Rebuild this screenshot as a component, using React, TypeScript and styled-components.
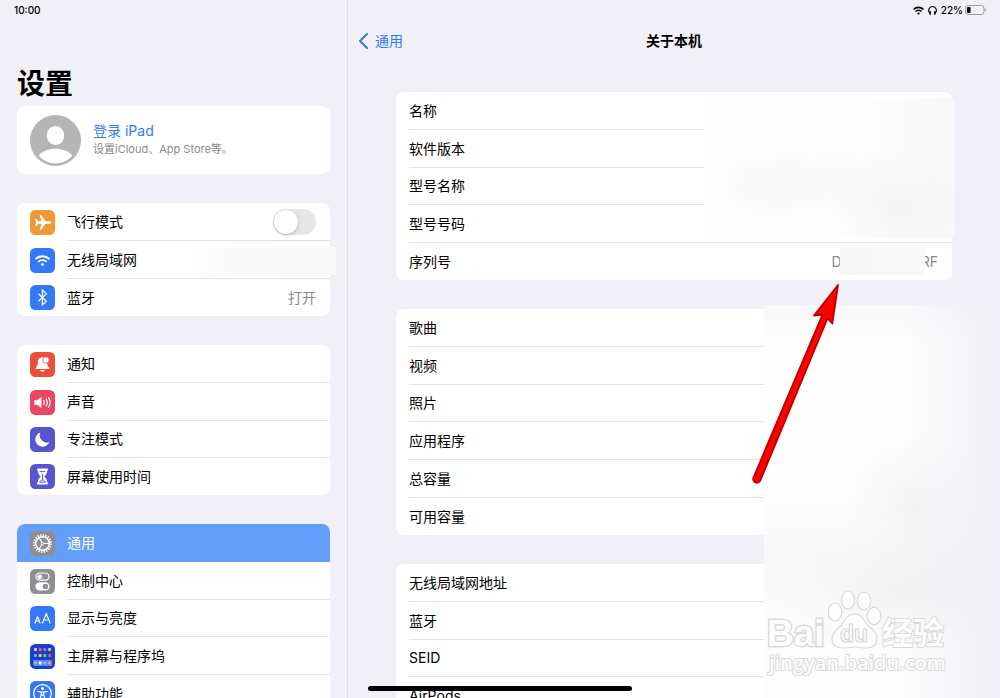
import React from "react";
import styled, { createGlobalStyle, css } from "styled-components";

const GlobalStyle = createGlobalStyle`
  *, *::before, *::after { box-sizing: border-box; }
  body {
    margin: 0;
    background: #f1f0f6;
    color: #000;
    font-family: Inter, "Noto Sans CJK SC", sans-serif;
    font-size: 14px;
    line-height: 20px;
  }
`;

const blue = "#2f79f6";
const line = "#e3e3e6";

const Screen = styled.div`
  position: relative;
  display: grid;
  grid-template-columns: 348px minmax(0, 1fr);
  height: 100vh;
  overflow: hidden;
`;

const Sidebar = styled.nav`
  padding: 0 17px;
  border-right: 1px solid #dfdfe4;
  overflow: hidden;
`;

const Main = styled.main`
  overflow: hidden;
`;

const StatusBar = styled.div<{ $end?: boolean }>`
  display: flex;
  align-items: center;
  justify-content: ${(p) => (p.$end ? "flex-end" : "flex-start")};
  gap: 4px;
  height: 20px;
  margin: ${(p) => (p.$end ? "0 13px 0 0" : "0 0 0 -3px")};
  font-size: 10px;
  font-weight: 500;
`;

const BatteryLevel = styled.span`
  display: flex;
  align-items: center;
  gap: 2px;
`;

const PageTitle = styled.h1`
  margin: 46px 0 4px;
  font-size: 28px;
  line-height: 36px;
  font-weight: 700;
`;

const Groups = styled.div`
  display: flex;
  flex-direction: column;
  gap: 29px;
`;

const cardStyle = css`
  background: #fff;
  border-radius: 8px;
`;

const Account = styled.a`
  ${cardStyle}
  display: flex;
  align-items: center;
  gap: 12px;
  min-height: 68px;
  padding: 0 13px;
  color: inherit;
  text-decoration: none;
`;

const AccountText = styled.span`
  display: flex;
  flex-direction: column;
`;

const AccountName = styled.span`
  color: ${blue};
  line-height: 18px;
`;

const AccountHint = styled.span`
  color: #8a8a8e;
  font-size: 11px;
  line-height: 18px;
`;

const rowHeights = css`
  height: 38px;
  &:nth-child(3n), &:last-child { height: 37px; }
`;

const NavGroup = styled.ul`
  ${cardStyle}
  margin: 0;
  padding: 0;
  list-style: none;
`;

const NavItem = styled.li<{ $active?: boolean }>`
  ${rowHeights}
  position: relative;
  display: flex;
  background: ${(p) => (p.$active ? "#639ff8" : "transparent")};
  color: ${(p) => (p.$active ? "#fff" : "#000")};
  &:first-child { border-radius: 8px 8px 0 0; }
`;

const rowLayout = css`
  flex: 1;
  display: flex;
  align-items: center;
  gap: 12px;
  padding-left: 13px;
  color: inherit;
  text-decoration: none;
`;

const NavLink = styled.a`${rowLayout}`;
const NavLabel = styled.label`${rowLayout}`;

const NavBody = styled.span<{ $line: boolean }>`
  flex: 1;
  align-self: stretch;
  display: flex;
  align-items: center;
  justify-content: space-between;
  padding-right: 14px;
  border-bottom: ${(p) => (p.$line ? `1px solid ${line}` : "0")};
`;

const NavValue = styled.span`
  color: #8a8a8e;
`;

const Toggle = styled.input`
  appearance: none;
  display: flex;
  width: 43px;
  height: 26px;
  margin: 0;
  padding: 1px;
  border-radius: 13px;
  background: #e6e6e7;
  &::before {
    content: "";
    width: 24px;
    height: 24px;
    border-radius: 12px;
    background: #fff;
    box-shadow: 0 1px 3px rgba(0, 0, 0, 0.25);
  }
  &:checked { justify-content: flex-end; background: #34c759; }
`;

const NetworkMask = styled.span`
  position: absolute;
  top: 6px;
  right: -6px;
  width: 150px;
  height: 28px;
  background: linear-gradient(90deg, rgba(247, 247, 248, 0), #f9f9fa 35%, #f7f7f8);
`;

const TopBar = styled.header`
  display: grid;
  grid-template-columns: 1fr auto 1fr;
  align-items: center;
  height: 42px;
  margin-bottom: 30px;
  padding: 0 10px;
`;

const Back = styled.a`
  display: flex;
  align-items: center;
  gap: 6px;
  color: ${blue};
  text-decoration: none;
`;

const Heading = styled.h2`
  margin: 0;
  font-size: 14px;
  font-weight: 700;
`;

const Details = styled(Groups)`
  position: relative;
  padding: 0 48px;
`;

const InfoGroup = styled.dl`
  ${cardStyle}
  margin: 0;
  padding-left: 13px;
`;

const InfoRow = styled.div`
  ${rowHeights}
  display: flex;
  align-items: center;
  justify-content: space-between;
  padding-right: 14px;
  border-bottom: 1px solid ${line};
  &:last-child { border-bottom: 0; }
`;

const InfoValue = styled.dd`
  display: flex;
  align-items: center;
  margin: 0;
  color: #8a8a8e;
`;

const SerialMask = styled.span`
  position: relative;
  width: 85px;
  height: 27px;
  margin: 0 -4px 0 -2px;
  background: linear-gradient(90deg, #f6f6f6, #f9f9f9);
`;

const InfoMask = styled.div`
  position: absolute;
  top: 7px;
  right: 45px;
  width: 251px;
  height: 138px;
  background:
    radial-gradient(ellipse 70px 60px at 196px 108px, #f4f4f4, rgba(248, 248, 248, 0)),
    radial-gradient(ellipse 60px 36px at 68px 86px, #f7f7f7, rgba(250, 250, 250, 0)),
    radial-gradient(ellipse 80px 36px at 130px 82px, #f9f9f9, rgba(250, 250, 250, 0)),
    linear-gradient(90deg, #fefefe 65%, #f8f8f9 95%);
`;

const ValuesMask = styled.div`
  position: absolute;
  top: 305px;
  right: 0;
  bottom: 0;
  width: 236px;
  background:
    linear-gradient(90deg, rgba(241, 240, 246, 0) 58%, rgba(241, 240, 246, 0.7) 86%, #f1f0f6 96%),
    radial-gradient(ellipse 70px 70px at 150px 200px, #f3f3f4, rgba(246, 246, 247, 0)),
    radial-gradient(ellipse 150px 65px at 145px 285px, #f2f2f3, rgba(246, 246, 247, 0)),
    linear-gradient(180deg, #f8f8fa, #fefefe 36px, #fefefe 190px, #f8f8fa 250px, #fdfdfd 310px);
`;

const Arrow = styled.svg`
  position: absolute;
  top: 280px;
  right: 156px;
`;

const Watermark = styled.svg`
  position: absolute;
  right: 36px;
  bottom: 18px;
`;

const HomeIndicator = styled.div`
  position: absolute;
  bottom: 7px;
  left: 50%;
  width: 264px;
  height: 5px;
  border-radius: 3px;
  background: #000;
  transform: translateX(-50%);
`;

const icons: Record<string, { bg: string; art: React.ReactNode }> = {
  airplane: {
    bg: "#f09a37",
    art: (
      <path
        fill="#fff"
        d="M21.2 12.5c0-.8-1.2-1.3-2.4-1.3h-3.4L11.3 5.2H9.6l2 6H8.1L6.5 9.1H5.2l.8 3.4-.8 3.4h1.3l1.6-2.1h3.5l-2 6h1.7l4.1-6h3.4c1.2 0 2.4-.5 2.4-1.3z"
      />
    ),
  },
  wifi: {
    bg: "#3478f6",
    art: (
      <g fill="none" stroke="#fff" strokeWidth="1.8">
        <path d="M5.6 11.1a9.8 9.8 0 0 1 13.8 0" />
        <path d="M8.3 13.9a6 6 0 0 1 8.4 0" />
        <path d="M12.5 18.2l-2-2.1a2.9 2.9 0 0 1 4 0z" fill="#fff" stroke="none" />
      </g>
    ),
  },
  bluetooth: {
    bg: "#3478f6",
    art: <path d="M8.4 8.8l8 7.4-4 3.7V5.1l4 3.7-8 7.4" fill="none" stroke="#fff" strokeWidth="1.2" />,
  },
  bell: {
    bg: "#eb4e3d",
    art: (
      <>
        <path
          fill="#fff"
          d="M12.3 5.2c-3.1 0-4.3 2.3-4.5 5-.2 3-.6 4-1.7 5.3-.4.5-.5.9-.4 1.5h13.6c.1-.6 0-1-.4-1.5-1.1-1.3-1.6-2.3-1.7-5.3-.2-2.7-1.8-5-4.9-5zM10.3 18h4.4c-.2 1-1.1 1.7-2.2 1.7s-2-.7-2.2-1.7z"
        />
        <circle cx="16" cy="8" r="3.2" fill="#fff" stroke="#eb4e3d" strokeWidth=".8" />
      </>
    ),
  },
  sound: {
    bg: "#eb4560",
    art: (
      <>
        <path fill="#fff" d="M4.3 10.2h2.9l4.3-3.5v11.6l-4.3-3.5H4.3z" />
        <g fill="none" stroke="#fff" strokeWidth="1.2" strokeLinecap="round">
          <path d="M13.8 10.6a3.5 3.5 0 0 1 0 3.8" />
          <path d="M16.2 9.1a6.4 6.4 0 0 1 0 6.8" />
          <path d="M18.6 7.6a9.4 9.4 0 0 1 0 9.8" />
        </g>
      </>
    ),
  },
  moon: {
    bg: "#5856ce",
    art: <path fill="#fff" d="M10.3 5.6a7.2 7.2 0 0 0 8.9 9.6 7.2 7.2 0 1 1-8.9-9.6z" />,
  },
  hourglass: {
    bg: "#5856ce",
    art: (
      <>
        <path
          fill="#fff"
          d="M7.2 4.5h10.6v2.2h-.7c0 2.7-1 4.2-2.9 5.8 1.900 1.600 2.900 3.100 2.900 5.800h.7v2.200H7.200v-2.200h.7c0-2.700 1-4.200 2.900-5.800-1.900-1.600-2.900-3.100-2.900-5.800h-.7z"
        />
        <path fill="none" stroke="#5856ce" d="M9.6 7.6h5.8M12.5 9.800v6.200M9.600 18.200c.6-1.500 1.800-2.100 2.900-2.100s2.300.6 2.900 2.100z" />
      </>
    ),
  },
  gear: {
    bg: "#8e8e93",
    art: (
      <g fill="none" stroke="#fff">
        <circle cx="12.5" cy="12.5" r="8.4" strokeWidth="2" strokeDasharray="1.32 1.32" />
        <circle cx="12.5" cy="12.5" r="6.8" strokeWidth="1.5" />
        <circle cx="12.5" cy="12.5" r="1.2" fill="#8e8e93" strokeWidth="1" />
        <path strokeWidth="1.1" d="M13.7 12.5h5.4M11.9 11.5L9.100 6.700M11.900 13.500l-2.800 4.700" />
      </g>
    ),
  },
  controls: {
    bg: "#8e8e93",
    art: (
      <>
        <rect x="6" y="4" width="13" height="7.2" rx="3.6" fill="none" stroke="#fff" strokeWidth="1.2" />
        <circle cx="9.8" cy="7.6" r="2.4" fill="#fff" />
        <rect x="5.4" y="13.2" width="14.2" height="8.4" rx="4.2" fill="#fff" />
        <circle cx="15.4" cy="17.4" r="2.7" fill="#8e8e93" />
      </>
    ),
  },
  display: {
    bg: "#3478f6",
    art: (
      <g fill="none" stroke="#fff" strokeWidth="1.2" strokeLinecap="round" strokeLinejoin="round">
        <path d="M5 17l2.500-6.400L10 17M5.900 15h3.200" />
        <path d="M12.500 17L16.300 7.600 20.100 17M13.800 14h5" />
      </g>
    ),
  },
  home: {
    bg: "#1a3fcf",
    art: (
      <>
        <rect x="3" y="16" width="19" height="6" rx="1" fill="#5f80ec" />
        {[
          "#f5b8c8", "#ef5a4a", "#b05cf0", "#c5d94e",
          "#4fb8f5", "#f5c33c", "#55d06a", "#ef5040",
          "#6fe07a", "#fff", "#62c6fa", "#f5a04a",
        ].map((fill, i) => (
          <rect
            key={i}
            x={4 + (i % 4) * 4.7}
            y={[4, 10, 17.5][Math.floor(i / 4)]}
            width="3"
            height="3"
            rx=".8"
            fill={fill}
          />
        ))}
      </>
    ),
  },
  accessibility: {
    bg: "#3478f6",
    art: (
      <>
        <circle cx="12.5" cy="12.5" r="8.8" fill="none" stroke="#fff" strokeWidth="1.2" />
        <circle cx="12.5" cy="7.6" r="1.5" fill="#fff" />
        <path
          d="M7.8 10.4l3.4.8v3l-1.400 4.600M17.200 10.400l-3.400.8v3l1.400 4.600M11.200 11.200h2.600v3h-2.600z"
          fill="none"
          stroke="#fff"
          strokeWidth="1.2"
          strokeLinecap="round"
        />
      </>
    ),
  },
};

const RowIcon = ({ name }: { name: string }) => (
  <svg width="25" height="25" viewBox="0 0 25 25" aria-hidden="true">
    <rect width="25" height="25" rx="5.5" fill={icons[name].bg} />
    {icons[name].art}
  </svg>
);

type Item = { icon: string; label: string; value?: string; kind?: "toggle" | "masked"; active?: boolean };

const navigation: Item[][] = [
  [
    { icon: "airplane", label: "飞行模式", kind: "toggle" },
    { icon: "wifi", label: "无线局域网", kind: "masked" },
    { icon: "bluetooth", label: "蓝牙", value: "打开" },
  ],
  [
    { icon: "bell", label: "通知" },
    { icon: "sound", label: "声音" },
    { icon: "moon", label: "专注模式" },
    { icon: "hourglass", label: "屏幕使用时间" },
  ],
  [
    { icon: "gear", label: "通用", active: true },
    { icon: "controls", label: "控制中心" },
    { icon: "display", label: "显示与亮度" },
    { icon: "home", label: "主屏幕与程序坞" },
    { icon: "accessibility", label: "辅助功能" },
  ],
];

const info: string[][] = [
  ["名称", "软件版本", "型号名称", "型号号码", "序列号"],
  ["歌曲", "视频", "照片", "应用程序", "总容量", "可用容量"],
  ["无线局域网地址", "蓝牙", "SEID", "AirPods"],
];

const NavRow = ({ item, last }: { item: Item; last: boolean }) => {
  const content = (
    <>
      <RowIcon name={item.icon} />
      <NavBody $line={!last && !item.active}>
        {item.label}
        {item.kind === "toggle" && <Toggle type="checkbox" role="switch" />}
        {item.value && <NavValue>{item.value}</NavValue>}
      </NavBody>
    </>
  );
  return (
    <NavItem $active={item.active}>
      {item.kind === "toggle" ? <NavLabel>{content}</NavLabel> : <NavLink href="#">{content}</NavLink>}
      {item.kind === "masked" && <NetworkMask />}
    </NavItem>
  );
};

const Avatar = () => (
  <svg width="51" height="51" viewBox="0 0 51 51" aria-hidden="true">
    <circle cx="25.5" cy="25.5" r="25.5" fill="#b5b5b7" />
    <ellipse cx="25.5" cy="20.5" rx="8.7" ry="9.6" fill="#fff" />
    <path
      d="M8.8 40.5C12.500 36 18.500 33.800 25.500 33.800S38.500 36 42.200 40.500C38 45.600 32 48.400 25.500 48.400S13 45.600 8.800 40.500z"
      fill="#fff"
    />
  </svg>
);

const StatusIcons = () => (
  <>
    <svg width="11" height="9" viewBox="0 0 11 9" fill="none" stroke="#000" strokeWidth="1.6" aria-hidden="true">
      <path d="M.6 3.400a7 7 0 0 1 9.800 0" />
      <path d="M2.500 5.500a4.200 4.200 0 0 1 6 0" />
      <path d="M5.500 8.800L3.900 7.200a2.300 2.300 0 0 1 3.200 0z" fill="#000" stroke="none" />
    </svg>
    <svg width="9" height="9" viewBox="0 0 9 9" aria-hidden="true">
      <path d="M1.700 7A3.700 3.900 0 1 1 7.300 7" fill="none" stroke="#000" strokeWidth="1.1" />
      <path d="M2.200 5.900v2M6.800 5.900v2" stroke="#000" strokeWidth="1.700" strokeLinecap="round" />
    </svg>
  </>
);

const BatteryIcon = () => (
  <svg width="22" height="10" viewBox="0 0 22 10" aria-hidden="true">
    <rect x=".5" y=".5" width="18.5" height="9" rx="2.6" fill="none" stroke="#9b9b9f" />
    <rect x="2" y="2" width="3.6" height="6" rx="1" fill="#000" />
    <path d="M20.200 3.400c1.300.4 1.300 2.800 0 3.200z" fill="#9b9b9f" />
  </svg>
);

export default function App() {
  return (
    <Screen>
      <GlobalStyle />
      <Sidebar>
        <StatusBar>10:00</StatusBar>
        <PageTitle>设置</PageTitle>
        <Groups>
          <Account href="#">
            <Avatar />
            <AccountText>
              <AccountName>登录 iPad</AccountName>
              <AccountHint>设置iCloud、App Store等。</AccountHint>
            </AccountText>
          </Account>
          {navigation.map((group, i) => (
            <NavGroup key={i}>
              {group.map((item, j) => (
                <NavRow key={item.label} item={item} last={j === group.length - 1} />
              ))}
            </NavGroup>
          ))}
        </Groups>
      </Sidebar>
      <Main>
        <StatusBar $end>
          <StatusIcons />
          <BatteryLevel>
            22%
            <BatteryIcon />
          </BatteryLevel>
        </StatusBar>
        <TopBar>
          <Back href="#">
            <svg width="11" height="16" viewBox="0 0 11 16" aria-hidden="true">
              <path
                d="M9 1L2 8l7 7"
                fill="none"
                stroke={blue}
                strokeWidth="2"
                strokeLinecap="round"
                strokeLinejoin="round"
              />
            </svg>
            通用
          </Back>
          <Heading>关于本机</Heading>
        </TopBar>
        <Details>
          {info.map((group, i) => (
            <InfoGroup key={i}>
              {group.map((label) => (
                <InfoRow key={label}>
                  <dt>{label}</dt>
                  {label === "序列号" && (
                    <InfoValue>
                      D<SerialMask />RF
                    </InfoValue>
                  )}
                </InfoRow>
              ))}
            </InfoGroup>
          ))}
          <InfoMask />
        </Details>
      </Main>
      <ValuesMask />
      <Watermark width="200" height="94" viewBox="0 0 200 94" role="img" aria-label="Baidu">
        <g fill="#fdfdfd" stroke="#dadadb" strokeWidth="1.2" fontFamily="Liberation Sans, sans-serif" fontWeight="700">
          <text x="3" y="60" fontSize="37" strokeWidth="3" paintOrder="stroke">Bai</text>
          <ellipse cx="71" cy="26" rx="6.8" ry="9" />
          <ellipse cx="84" cy="14" rx="6.6" ry="9" />
          <ellipse cx="100" cy="15" rx="6.8" ry="8.8" />
          <ellipse cx="110" cy="30" rx="6.8" ry="8.800" />
          <path d="M90.500 28c8 0 9 7 14 12 5 4 8.500 8 8.500 13 0 6-5 9-10.500 9-5 0-7.500-1-12-1s-7 1-12 1C73 62 68 59 68 53c0-5 3.500-9 8.500-13 5-5 6-12 14-12z" />
          <text x="76" y="56" fontSize="23" strokeWidth="1.2">du</text>
          <text x="118" y="58" fontSize="31" fontFamily="Noto Sans CJK SC, sans-serif" strokeWidth="2" paintOrder="stroke">
            经验
          </text>
          <text
            x="5"
            y="84"
            fontSize="20"
            fontFamily="Open Sans, sans-serif"
            fontWeight="600"
            strokeWidth="2"
            paintOrder="stroke"
          >
            jingyan.baidu.com
          </text>
        </g>
      </Watermark>
      <Arrow width="96" height="210" viewBox="748 280 96 210" aria-hidden="true">
        <path
          d="M838 285L814 315.500L822.500 314.500L753.500 477.500A3.700 3.700 0 0 0 760.300 480.500L827.500 318.500L832.300 323.500Z"
          fill="#fe0000"
          stroke="#b90000"
          strokeWidth="1.8"
          strokeLinejoin="round"
        />
      </Arrow>
      <HomeIndicator />
    </Screen>
  );
}
